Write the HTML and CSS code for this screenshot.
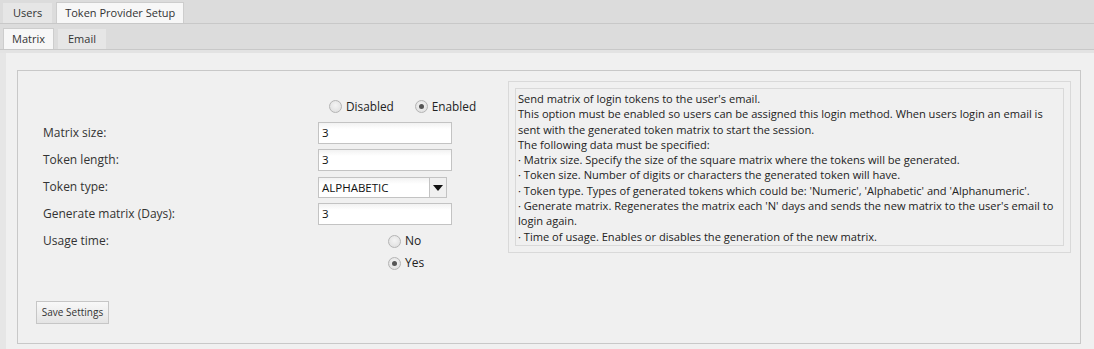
FILE: index.html
```html
<!DOCTYPE html>
<html>
<head>
<meta charset="utf-8">
<link rel="stylesheet" href="styles.css">
</head>
<body>
<div class="tabbar top">
  <div class="tab">Users</div>
  <div class="tab active">Token Provider Setup</div>
</div>
<div class="tabbar sub">
  <div class="tab active">Matrix</div>
  <div class="tab">Email</div>
</div>
<div class="band"></div>
<div class="content">
  <div class="panel">
    <div class="form">
      <div class="row status">
        <div class="label"></div>
        <div class="control radios-inline">
          <span class="opt"><span class="radio"></span>Disabled</span>
          <span class="opt"><span class="radio checked"></span>Enabled</span>
        </div>
      </div>
      <div class="row">
        <div class="label">Matrix size:</div>
        <div class="control"><div class="input">3</div></div>
      </div>
      <div class="row">
        <div class="label">Token length:</div>
        <div class="control"><div class="input">3</div></div>
      </div>
      <div class="row">
        <div class="label">Token type:</div>
        <div class="control">
          <div class="select"><span class="sel-text">ALPHABETIC</span><span class="sel-btn"><svg width="10" height="6" viewBox="0 0 10 6"><path d="M0 0 H10 L5 6 Z" fill="#111"/></svg></span></div>
        </div>
      </div>
      <div class="row">
        <div class="label">Generate matrix (Days):</div>
        <div class="control"><div class="input">3</div></div>
      </div>
      <div class="row usage">
        <div class="label">Usage time:</div>
        <div class="control radios-stack">
          <span class="opt"><span class="radio"></span>No</span>
          <span class="opt"><span class="radio checked"></span>Yes</span>
        </div>
      </div>
      <div class="actions">
        <div class="button">Save Settings</div>
      </div>
    </div>
    <div class="desc">
      <div class="desc-inner">Send matrix of login tokens to the user's email.<br>This option must be enabled so users can be assigned this login method. When users login an email is<br>sent with the generated token matrix to start the session.<br>The following data must be specified:<br>· Matrix size. Specify the size of the square matrix where the tokens will be generated.<br>· Token size. Number of digits or characters the generated token will have.<br>· Token type. Types of generated tokens which could be: 'Numeric', 'Alphabetic' and 'Alphanumeric'.<br>· Generate matrix. Regenerates the matrix each 'N' days and sends the new matrix to the user's email to<br>login again.<br>· Time of usage. Enables or disables the generation of the new matrix.</div>
    </div>
  </div>
</div>
</body>
</html>
```

FILE: styles.css
```css
* { box-sizing: border-box; }
html, body { margin: 0; padding: 0; }
body {
  font-family: "Open Sans", "Noto Sans", sans-serif;
  background: #f0f0f0;
  color: #333;
  width: 1094px;
  height: 349px;
  overflow: hidden;
}
.tabbar {
  background: #dcdcdc;
  border-bottom: 1px solid #c8c8c8;
  display: flex;
  align-items: flex-end;
  gap: 4px;
  padding-left: 3px;
}
.tabbar.top { height: 24px; }
.tabbar.sub { height: 26px; }
.tab {
  height: 20px;
  line-height: 20px;
  padding: 0 10px;
  font-size: 11px;
  background: #e6e6e6;
  color: #333;
}
.tab.active {
  height: 21px;
  line-height: 20px;
  background: #f7f7f7;
  border: 1px solid #cdcdcd;
  border-bottom: none;
  padding: 0 8px;
}
.band { height: 3px; background: #e3e3e3; }
.content {
  border-left: 6px solid #e6e6e6;
  padding: 17px 13px 5px 11px;
  height: 296px;
}
.panel {
  border: 1px solid #c8c8c8;
  height: 274px;
  display: flex;
  align-items: flex-start;
}
.form {
  width: 490px;
  flex: none;
  padding: 25px 0 0 18px;
  display: flex;
  flex-direction: column;
  gap: 5px;
}
.row {
  display: flex;
  align-items: flex-start;
  height: 22px;
}
.row.status { height: 20px; margin-bottom: 1px; }
.label {
  width: 282px;
  padding-left: 7px;
  font-size: 12px;
  line-height: 22px;
  color: #333;
}
.control { font-size: 12px; }
.input {
  width: 134px;
  height: 22px;
  border: 1px solid #c3c3c3;
  background: linear-gradient(#f2f2f2, #fff 6px);
  font-size: 11.5px;
  line-height: 20px;
  padding-left: 3px;
  color: #111;
}
.select {
  margin-top: 1px;
  width: 129px;
  height: 21px;
  border: 1px solid #c3c3c3;
  background: linear-gradient(#f2f2f2, #fff 6px);
  display: flex;
  font-size: 11.5px;
  line-height: 19px;
  color: #111;
}
.sel-text { flex: 1; padding-left: 3px; }
.sel-btn {
  width: 17px;
  border-left: 1px solid #c3c3c3;
  background: #f0f0f0;
  display: flex;
  align-items: center;
  justify-content: center;
}
.radios-inline {
  display: flex;
  gap: 21px;
  padding-left: 11px;
  line-height: 20px;
  font-size: 11.8px;
  color: #222;
}
.opt { display: inline-flex; align-items: center; gap: 4px; }
.radio {
  width: 13px;
  height: 13px;
  border-radius: 50%;
  border: 1px solid #b4b4b4;
  background: radial-gradient(circle at 50% 40%, #f4f4f4, #dcdcdc);
  position: relative;
  display: inline-block;
}
.radio.checked::after {
  content: "";
  position: absolute;
  left: 3px;
  top: 3px;
  width: 5px;
  height: 5px;
  border-radius: 50%;
  background: #555;
}
.row.usage { height: 44px; }
.radios-stack {
  display: flex;
  flex-direction: column;
  padding-left: 70px;
  font-size: 12px;
  line-height: 22px;
  color: #222;
}
.actions { padding-top: 22px; }
.button {
  width: 73px;
  height: 23px;
  border: 1px solid #c6c6c6;
  background: linear-gradient(#f8f8f8, #e4e4e4);
  font-size: 10px;
  line-height: 21px;
  text-align: center;
  color: #333;
}
.desc {
  flex: none;
  margin-top: 10px;
  width: 563px;
  border: 1px solid #d9d9d9;
  padding: 6px;
}
.desc-inner {
  border: 1px solid #d9d9d9;
  padding: 2px 2px 1px;
  font-size: 11.1px;
  line-height: 15.3px;
  color: #222;
  white-space: nowrap;
  overflow: hidden;
}
```
